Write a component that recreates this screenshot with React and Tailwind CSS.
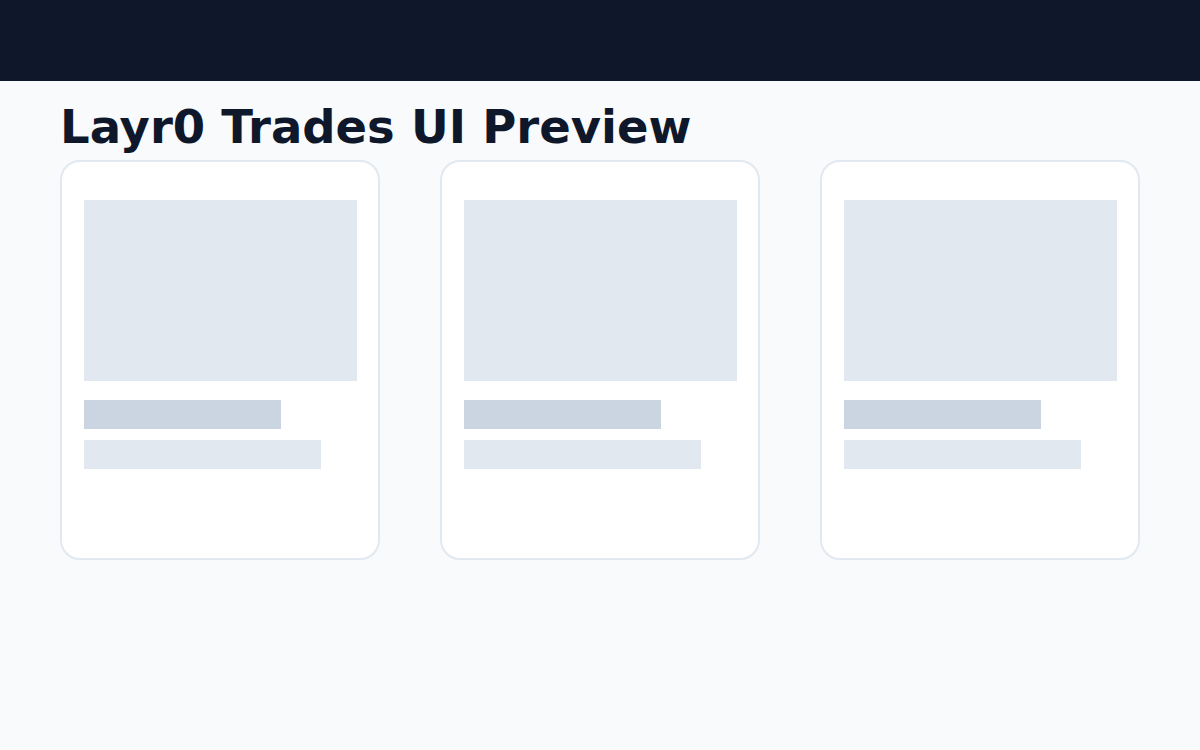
export default function App() {
  const cards = [0, 1, 2];
  return (
    <div className="w-[1200px] h-[750px] bg-[#f8fafc] overflow-hidden" style={{ fontFamily: '"DejaVu Sans", sans-serif' }}>
      <div className="h-[81px] bg-[#0f172a]" />
      <div className="px-[60px]">
        <h1 className="mt-[23px] h-[56px] text-[46.5px] leading-none font-bold text-[#0f172a]">Layr0 Trades UI Preview</h1>
        <div className="flex gap-[60px]">
          {cards.map((i) => (
            <div key={i} className="w-[320px] h-[400px] bg-white border-2 border-[#e2e8f0] rounded-[20px] pt-[38px] px-[22px]">
              <div className="h-[181px] w-[273px] bg-[#e2e8f0]" />
              <div className="mt-[19px] h-[29px] w-[197px] bg-[#cbd5e1]" />
              <div className="mt-[11px] h-[29px] w-[237px] bg-[#e2e8f0]" />
            </div>
          ))}
        </div>
      </div>
    </div>
  );
}
